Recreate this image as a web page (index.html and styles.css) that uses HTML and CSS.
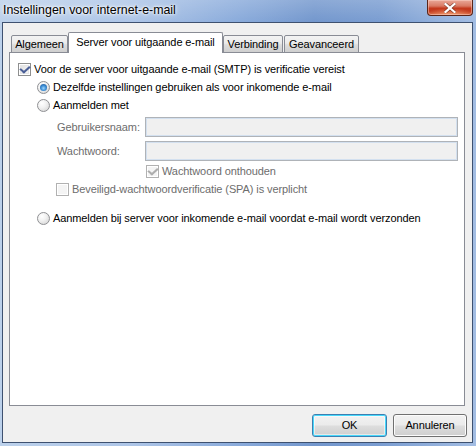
FILE: index.html
```html
<!DOCTYPE html>
<html>
<head>
<meta charset="utf-8">
<link rel="stylesheet" href="styles.css">
</head>
<body>
<div class="window">
  <div class="titlebar">
    <span class="title">Instellingen voor internet-e-mail</span>
    <div class="close">
      <svg width="12" height="10" viewBox="0 0 12 10"><path d="M1.5 1 L10.5 9 M10.5 1 L1.5 9" stroke="#3a1208" stroke-width="3.4" stroke-linecap="square" opacity="0.55"/><path d="M1.5 1 L10.5 9 M10.5 1 L1.5 9" stroke="#ffffff" stroke-width="2.2" stroke-linecap="square"/></svg>
    </div>
  </div>
  <div class="client">
    <div class="tabs">
      <div class="tab w1">Algemeen</div>
      <div class="tab sel">Server voor uitgaande e-mail</div>
      <div class="tab w3">Verbinding</div>
      <div class="tab w4">Geavanceerd</div>
    </div>
    <div class="panel">
      <div class="row r1 ind1"><span class="cb checked"></span><span class="lbl">Voor de server voor uitgaande e-mail (SMTP) is verificatie vereist</span></div>
      <div class="row ind2"><span class="rb on"></span><span class="lbl">Dezelfde instellingen gebruiken als voor inkomende e-mail</span></div>
      <div class="row ind2"><span class="rb"></span><span class="lbl">Aanmelden met</span></div>
      <div class="field f1"><span class="flabel">Gebruikersnaam:</span><span class="input"></span></div>
      <div class="field f2"><span class="flabel">Wachtwoord:</span><span class="input"></span></div>
      <div class="row r6 ind6"><span class="cb checked dis"></span><span class="lbl dim">Wachtwoord onthouden</span></div>
      <div class="row ind7"><span class="cb dis"></span><span class="lbl dim">Beveiligd-wachtwoordverificatie (SPA) is verplicht</span></div>
      <div class="row r8 ind2"><span class="rb"></span><span class="lbl">Aanmelden bij server voor inkomende e-mail voordat e-mail wordt verzonden</span></div>
    </div>
    <div class="buttons">
      <div class="btn def">OK</div>
      <div class="btn b2">Annuleren</div>
    </div>
  </div>
</div>
</body>
</html>
```
FILE: styles.css
```css
html, body {
  margin: 0;
  padding: 0;
  width: 476px;
  height: 446px;
  overflow: hidden;
}
body {
  font-family: "Liberation Sans", Arial, sans-serif;
  font-size: 11px;
  letter-spacing: -0.1px;
  color: #000;
}
.window {
  width: 476px;
  height: 446px;
  box-sizing: border-box;
  display: flex;
  flex-direction: column;
  background:
    linear-gradient(180deg, rgba(255,255,255,0.18) 0px, rgba(255,255,255,0) 22px),
    linear-gradient(90deg, #bcd1eb 0%, #adc5e7 28%, #8aabdb 50%, #7397cd 66%, #7a9dd1 80%, #a3bde3 100%);
}
.titlebar {
  height: 22px;
  flex: none;
  display: flex;
  align-items: flex-start;
  justify-content: space-between;
}
.title {
  font-family: "Liberation Sans", Arial, sans-serif;
  font-size: 12.4px;
  letter-spacing: 0;
  line-height: 14px;
  margin: 3px 0 0 3px;
  color: #000;
  text-shadow: 0 0 6px #fff, 0 0 3px #fff, 0 0 2px rgba(255,255,255,0.8);
}
.close {
  width: 44px;
  height: 15px;
  margin-right: 3px;
  border: 1px solid #5a2518;
  border-top: none;
  border-radius: 0 0 4px 4px;
  background:
    radial-gradient(ellipse 60% 45% at 50% 100%, rgba(255,190,140,0.7), rgba(255,150,100,0) 100%),
    linear-gradient(180deg, #e9a898 0%, #d97a64 40%, #c4391d 55%, #c33a1d 80%, #d5613e 100%);
  box-shadow: inset 0 0 0 1px rgba(255,220,210,0.45);
  display: flex;
  align-items: center;
  justify-content: center;
}
.close svg { display: block; }
.client {
  flex: 1;
  margin: 0 3px 3px 2px;
  border: 1px solid #3e5170;
  background: #f0f0f0;
  padding: 9px 7px 0 6px;
  display: flex;
  flex-direction: column;
}
.tabs {
  display: flex;
  align-items: flex-end;
  height: 21px;
  margin-left: 2px;
  position: relative;
  z-index: 2;
}
.tab {
  box-sizing: border-box;
  height: 18px;
  border: 1px solid #898c95;
  border-radius: 2px 2px 0 0;
  background: linear-gradient(180deg, #f3f3f3 0%, #ebebeb 45%, #dddddd 55%, #cfcfcf 100%);
  text-align: center;
  line-height: 16px;
  white-space: nowrap;
  flex: none;
}
.w1 { width: 57px; }
.w3 { width: 60px; }
.w4 { width: 75px; margin-left: 1px; }
.tab.sel {
  width: 155px;
  height: 21px;
  background: #fff;
  border-bottom: none;
  line-height: 19px;
}
.panel {
  margin-top: -1px;
  height: 354px;
  box-sizing: border-box;
  border: 1px solid #898c95;
  background: #fff;
  position: relative;
  z-index: 1;
}
.row {
  height: 18px;
  display: flex;
  align-items: center;
  white-space: nowrap;
}
.r1 { margin-top: 7px; }
.ind1 { padding-left: 8px; }
.ind2 { padding-left: 27px; }
.ind6 { padding-left: 136px; }
.ind7 { padding-left: 46px; }
.r6 { margin-top: 1px; }
.r8 { margin-top: 11px; }
.lbl { margin-left: 3px; }
.dim { color: #6d6d6d; }
.field {
  display: flex;
  align-items: center;
  height: 20px;
  padding-left: 47px;
  padding-right: 6px;
}
.f1 { margin-top: 3px; }
.f2 { margin-top: 4px; }
.flabel {
  width: 88px;
  color: #6d6d6d;
  flex: none;
}
.input {
  flex: 1;
  height: 20px;
  box-sizing: border-box;
  border: 1px solid #afb3b8;
  box-shadow: inset 0 0 0 1px #d3e0ef;
  background: #f0f0f0;
}
.cb {
  width: 13px;
  height: 13px;
  box-sizing: border-box;
  border: 1px solid #8e8f8f;
  background: linear-gradient(135deg, #dcdcdc 0%, #fbfbfb 100%);
  box-shadow: inset 0 0 0 1px #fff, inset 0 0 0 2px #e6e6e6;
  flex: none;
  position: relative;
}
.cb.checked::after {
  content: "";
  position: absolute;
  left: 2px;
  top: 0px;
  width: 4px;
  height: 7px;
  border-right: 2px solid #4a5f97;
  border-bottom: 2px solid #4a5f97;
  transform: rotate(40deg) skewX(-8deg);
  margin-left: 1px;
}
.cb.dis {
  border-color: #b1b1b1;
  background: #f4f4f4;
  box-shadow: inset 0 0 0 1px #fff;
}
.cb.dis.checked::after {
  border-color: #adadad;
}
.rb {
  width: 13px;
  height: 13px;
  box-sizing: border-box;
  border-radius: 50%;
  border: 1px solid #8f9093;
  background: radial-gradient(circle at 35% 30%, #ffffff 0%, #f2f2f2 40%, #cfcfcf 100%);
  flex: none;
  position: relative;
}
.rb.on::after {
  content: "";
  position: absolute;
  left: 2px;
  top: 2px;
  width: 7px;
  height: 7px;
  border-radius: 50%;
  background: radial-gradient(circle at 50% 60%, #9fd6fb 0%, #3c8ed6 45%, #1b4d8a 100%);
}
.buttons {
  display: flex;
  justify-content: flex-end;
  gap: 6px;
  margin-top: 8px;
  margin-right: -2px;
}
.btn {
  box-sizing: border-box;
  width: 75px;
  height: 23px;
  border: 1px solid #707070;
  border-radius: 3px;
  background: linear-gradient(180deg, #f2f2f2 0%, #ebebeb 48%, #dddddd 52%, #cfcfcf 100%);
  box-shadow: inset 0 0 0 1px #fcfcfc;
  text-align: center;
  line-height: 21px;
}
.btn.b2 { width: 74px; }
.btn.def {
  border-color: #3c7fb1;
  box-shadow: inset 0 0 0 1px #48d8fb, inset 0 0 0 2px rgba(255,255,255,0.5);
}
```
